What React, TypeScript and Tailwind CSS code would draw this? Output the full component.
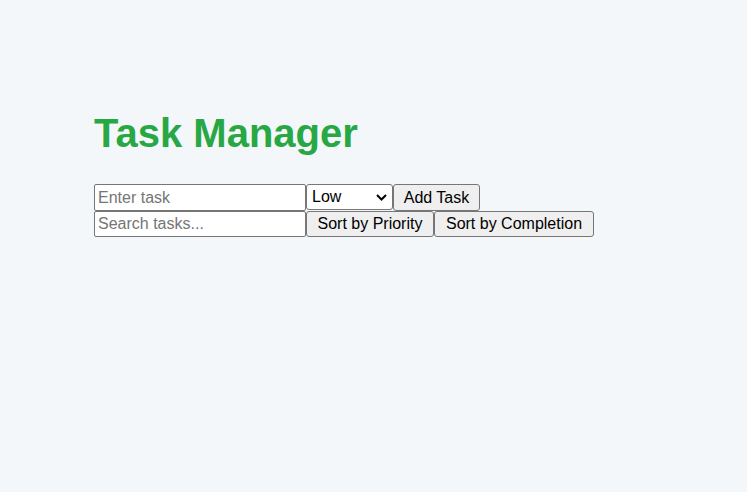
import React from "react";

export default function App() {
  const font = "font-['Liberation_Sans',Arial,sans-serif]";
  return (
    <div className={`min-h-screen w-full bg-[#f4f7f9] ${font} text-black`}>
      <div className="pl-[94px] pt-[110px]">
        <h1 className="text-[40px] leading-[46px] font-bold text-[#28a745] mb-[28px]">Task Manager</h1>
        <div className="flex items-start h-[27px]">
          <input
            type="text"
            placeholder="Enter task"
            className="w-[212px] h-[27px] bg-white border border-[#767676] rounded-[2px] px-[3px] text-[16px] placeholder:text-[#757575] outline-none"
          />
          <div className="relative w-[87px] h-[26px]">
            <select
              defaultValue="Low"
              className="w-[87px] h-[26px] bg-white border border-[#767676] rounded-[3px] pl-[5px] text-[16px] appearance-none outline-none"
            >
              <option>Low</option>
              <option>Medium</option>
              <option>High</option>
            </select>
            <svg
              className="pointer-events-none absolute right-[6px] top-[10px]"
              width="11"
              height="7"
              viewBox="0 0 11 7"
            >
              <polyline points="1,1 5.5,5.5 10,1" fill="none" stroke="#000" strokeWidth="2" />
            </svg>
          </div>
          <button className="w-[87px] h-[27px] bg-[#efefef] border border-[#767676] rounded-[3px] text-[16px] text-center">
            Add Task
          </button>
        </div>
        <div className="flex items-start h-[26px]">
          <input
            type="text"
            placeholder="Search tasks..."
            className="w-[212px] h-[26px] bg-white border border-[#767676] rounded-[2px] px-[3px] text-[16px] placeholder:text-[#757575] outline-none"
          />
          <button className="w-[128px] h-[26px] bg-[#efefef] border border-[#767676] rounded-[3px] text-[16px] text-center">
            Sort by Priority
          </button>
          <button className="w-[160px] h-[26px] bg-[#efefef] border border-[#767676] rounded-[3px] text-[16px] text-center">
            Sort by Completion
          </button>
        </div>
      </div>
    </div>
  );
}
